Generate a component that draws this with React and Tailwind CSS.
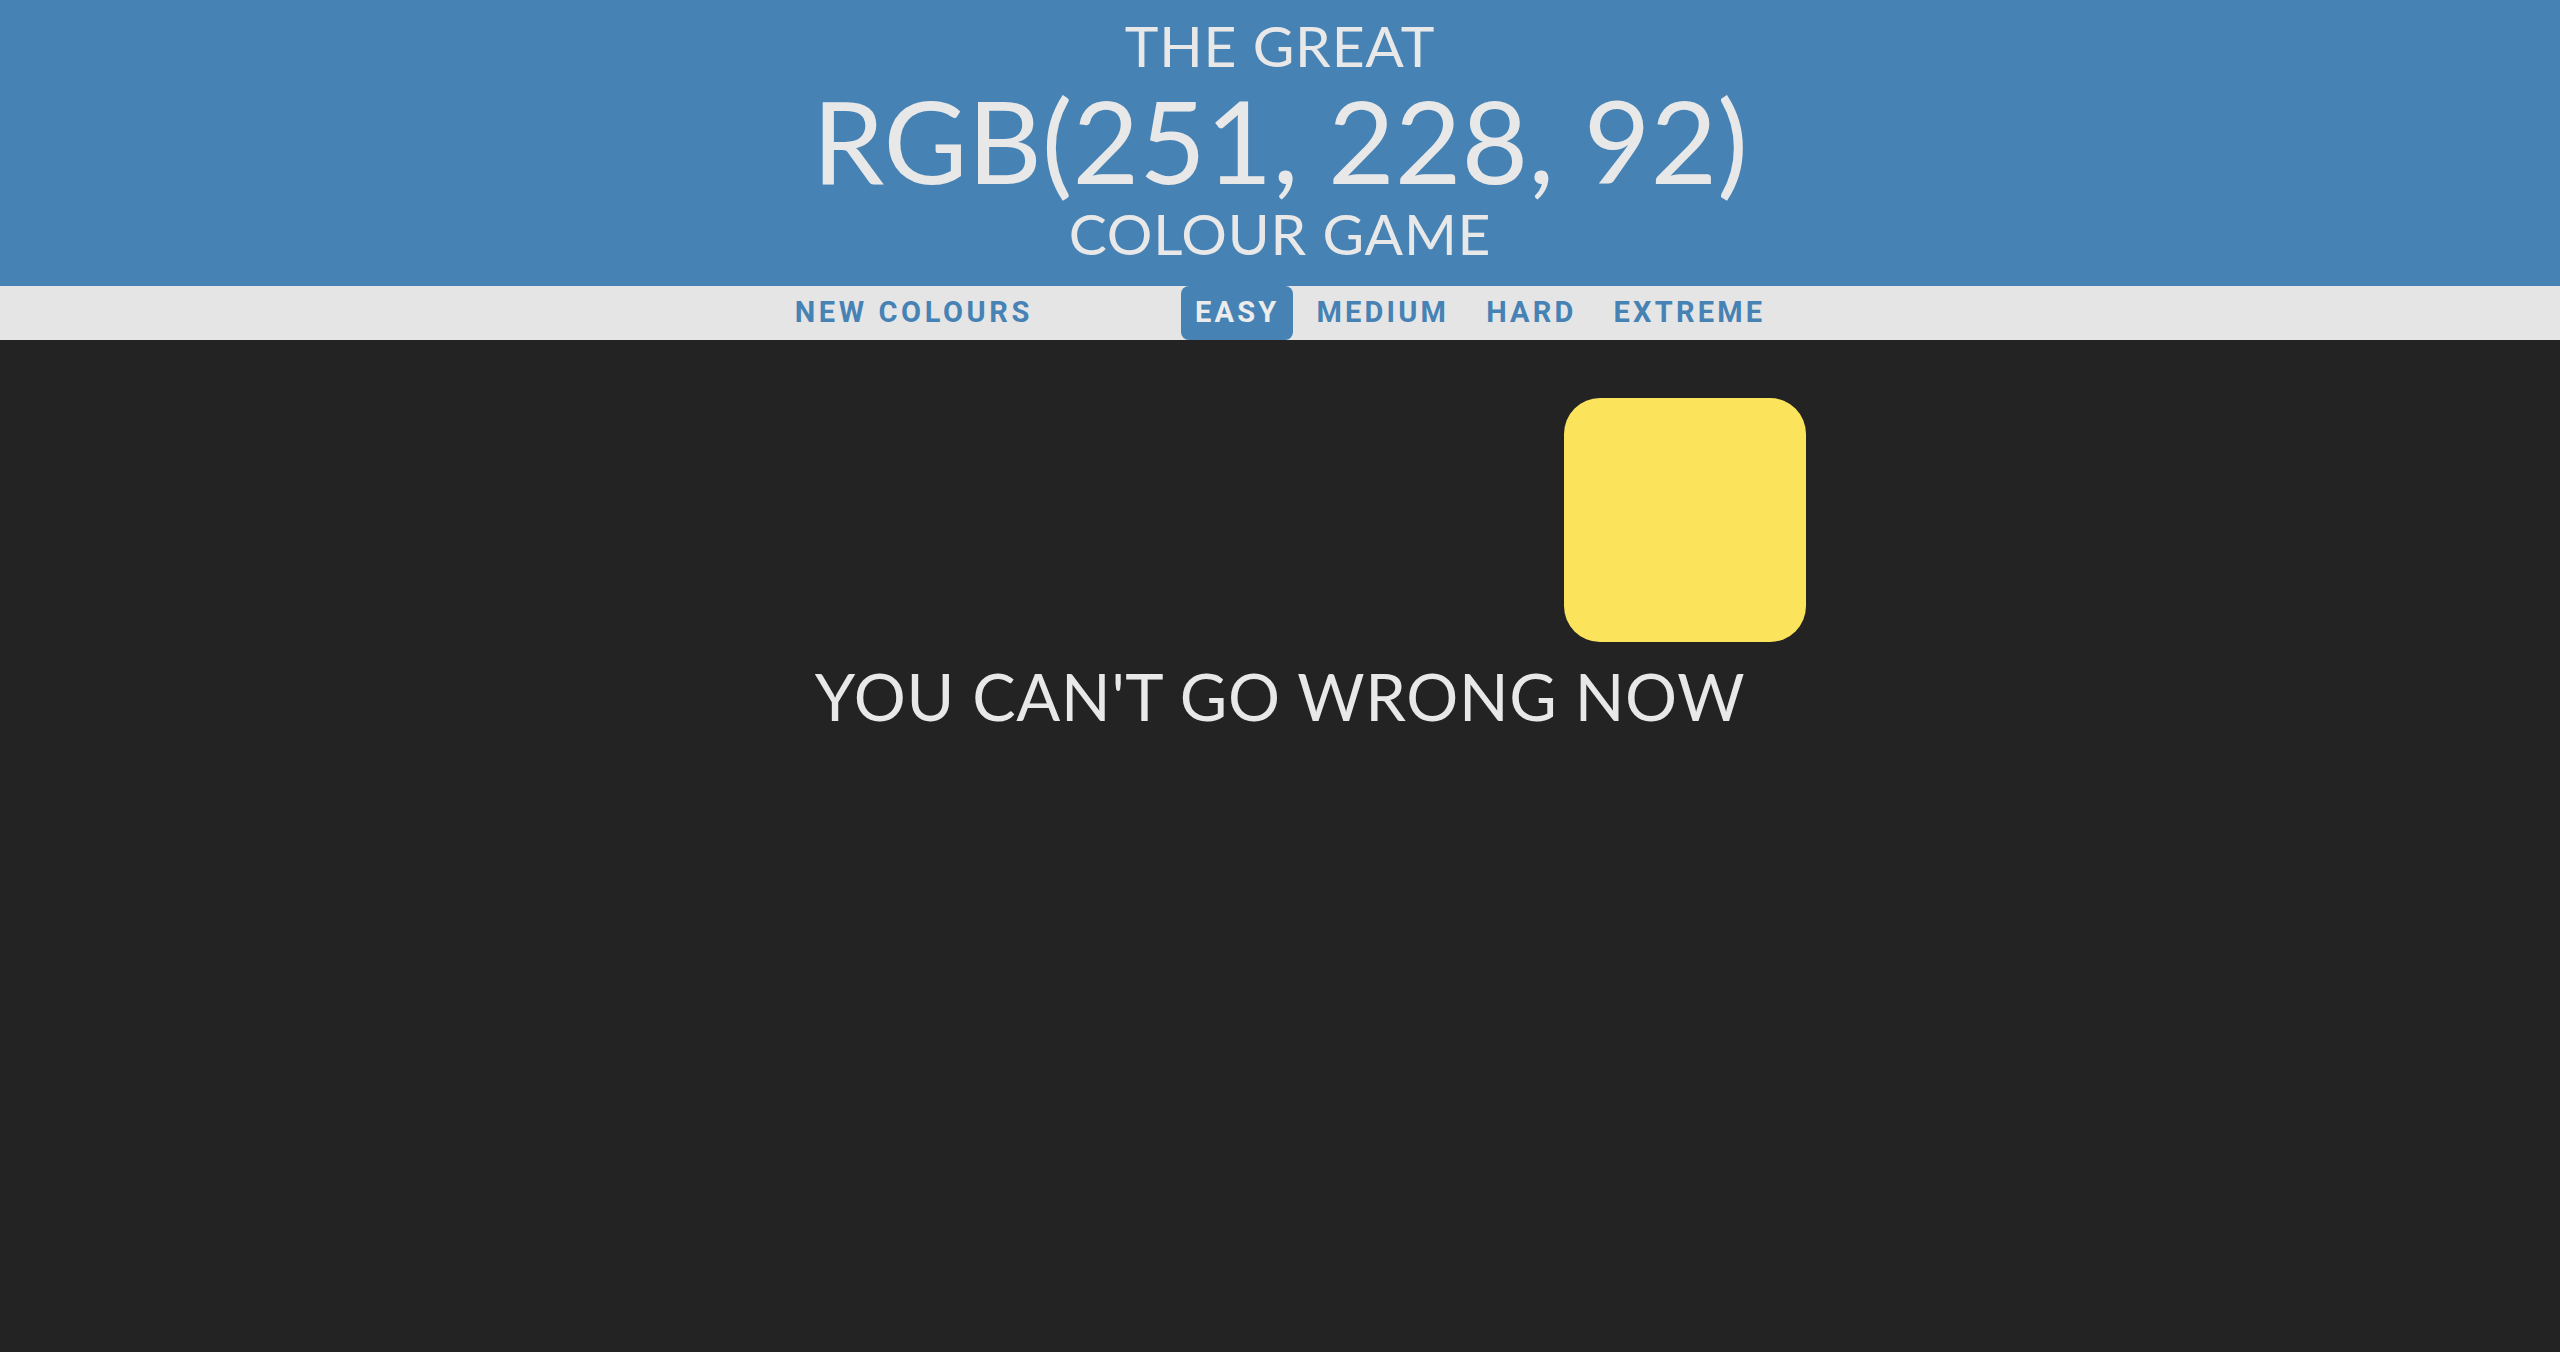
export default function App() {
  const hdr = { fontFamily: "Lato, 'Noto Sans', sans-serif" };
  const nav = { fontFamily: "Roboto, 'Liberation Sans', sans-serif" };
  return (
    <div className="min-h-[1352px] w-full bg-[#232323]" style={hdr}>
      <header className="h-[286px] bg-[#4682b4] text-[#e8e8e8] flex flex-col items-center uppercase font-normal">
        <div className="text-[57px] leading-[57px] mt-[17px] tracking-[0.8px]">The Great</div>
        <div className="text-[115px] leading-[115px] mt-[8px]">RGB(251, 228, 92)</div>
        <div className="text-[57px] leading-[57px] mt-[8px] tracking-[0.8px]">Colour Game</div>
      </header>
      <nav className="h-[54px] bg-[#e5e5e5] flex justify-center text-[29px] font-bold uppercase text-[#4682b4]" style={nav}>
        <div className="flex items-stretch gap-[9px]">
          <button className="px-[14px] uppercase tracking-[3.6px]">New Colours</button>
          <div className="w-[116px]" />
          <button className="px-[14px] rounded-[8px] bg-[#4682b4] text-[#ececec] uppercase tracking-[3.2px]">Easy</button>
          <button className="px-[14px] uppercase tracking-[3.2px]">Medium</button>
          <button className="px-[14px] uppercase tracking-[3.2px]">Hard</button>
          <button className="px-[14px] uppercase tracking-[3.2px]">Extreme</button>
        </div>
      </nav>
      <main className="flex flex-col items-center">
        <div className="w-[1052px] flex gap-[163px] mt-[58px]">
          <div className="w-[242px] h-[244px] rounded-[36px] bg-[#232323]" />
          <div className="w-[242px] h-[244px] rounded-[36px] bg-[#232323]" />
          <div className="w-[242px] h-[244px] rounded-[36px] bg-[#fbe45c]" />
        </div>
        <div className="text-[65px] leading-[65px] text-[#e8e8e8] uppercase mt-[22px] font-normal tracking-[0.7px]">You can't go wrong now</div>
      </main>
    </div>
  );
}
